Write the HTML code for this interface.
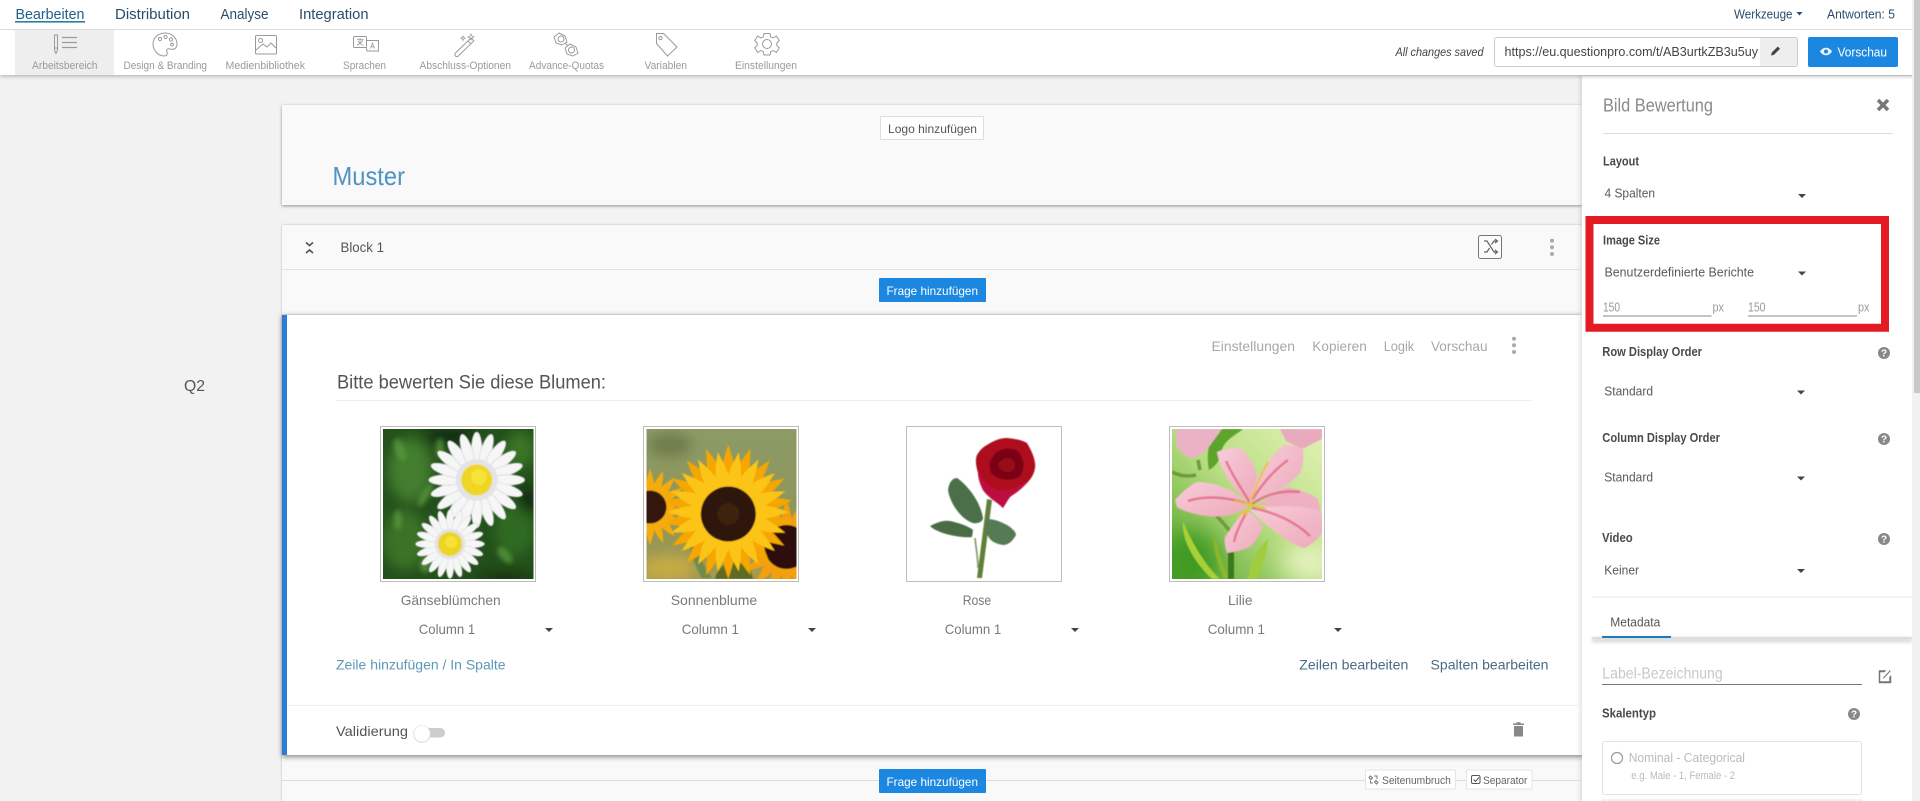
<!DOCTYPE html>
<html lang="de">
<head>
<meta charset="utf-8">
<title>Bild Bewertung</title>
<style>
html,body{margin:0;padding:0;width:1920px;height:801px;overflow:hidden;background:#f2f2f2;font-family:"Liberation Sans",sans-serif}
.a{position:absolute}
svg{position:absolute;left:0;top:0}
text{font-family:"Liberation Sans",sans-serif;white-space:pre}
.t{font-size:14px;fill:#666}
.nav{font-size:15px;fill:#2b4c6b}
.tb{font-size:11px;fill:#9a9a9a}
.lb{font-size:13px;font-weight:bold;fill:#4a4a4a}
.v{font-size:13px;fill:#5a5a5a}
.act{font-size:14px;fill:#a8a8a8}
.lab{font-size:14px;fill:#7a7a7a}
.ic{fill:none;stroke:#9a9a9a;stroke-width:1}
</style>
</head>
<body>
<div class="a" style="left:282px;top:105px;width:1300px;height:100px;background:#f9f9f9;box-shadow:0 1px 3px rgba(0,0,0,.4)"></div>
<div class="a" style="left:282px;top:225px;width:1300px;height:576px;background:#f9f9f9;box-shadow:0 0 2px rgba(0,0,0,.25)"></div>
<div class="a" style="left:282px;top:314px;width:1301px;height:441px;background:#fff;box-shadow:0 2px 5px rgba(0,0,0,.45)"></div>
<div class="a" style="left:282px;top:314px;width:4.5px;height:441px;background:#2a7fd4"></div>
<div class="a" style="left:1582px;top:76px;width:330px;height:725px;background:#fff;box-shadow:-2px 0 4px rgba(0,0,0,.12)"></div>
<div class="a" style="left:1592px;top:596px;width:320px;height:2px;background:#f3f3f3"></div>
<div class="a" style="left:1592px;top:637px;width:320px;height:2px;background:#ddd;box-shadow:0 2px 4px rgba(0,0,0,.35)"></div>
<div class="a" style="left:0;top:0;width:1920px;height:75px;background:#fff;box-shadow:0 1px 4px rgba(0,0,0,.3)"></div>
<div class="a" style="left:0;top:29px;width:1914px;height:1px;background:#ddd"></div>
<div class="a" style="left:15px;top:30px;width:99px;height:45px;background:#eee"></div>
<div class="a" style="left:1912px;top:0;width:8px;height:801px;background:#f1f1f1"></div>
<div class="a" style="left:1914px;top:0;width:6px;height:393px;background:#c8c8c8"></div>

<svg width="1920" height="801" viewBox="0 0 1920 801" xmlns="http://www.w3.org/2000/svg">
<defs>
<filter id="b0" x="-10%" y="-10%" width="120%" height="120%"><feGaussianBlur stdDeviation="0.5"/></filter>
<filter id="b1" x="-10%" y="-10%" width="120%" height="120%"><feGaussianBlur stdDeviation="0.8"/></filter>
<filter id="b3" x="-30%" y="-30%" width="160%" height="160%"><feGaussianBlur stdDeviation="2.5"/></filter>
<filter id="b6" x="-50%" y="-50%" width="200%" height="200%"><feGaussianBlur stdDeviation="6"/></filter>
<filter id="b12" x="-80%" y="-80%" width="260%" height="260%"><feGaussianBlur stdDeviation="12"/></filter>
<clipPath id="c1"><rect x="383" y="429" width="150.5" height="150"/></clipPath>
<clipPath id="c2"><rect x="646.5" y="429" width="150" height="150"/></clipPath>
<clipPath id="c4"><rect x="1172" y="429" width="150" height="150"/></clipPath>
<linearGradient id="sun" x1="0" y1="0" x2="0" y2="1"><stop offset="0" stop-color="#8c9a68"/><stop offset=".6" stop-color="#8f9658"/><stop offset="1" stop-color="#a69a50"/></linearGradient>
<linearGradient id="lil" x1="1" y1="0" x2="0" y2="1"><stop offset="0" stop-color="#e2f2b4"/><stop offset=".5" stop-color="#b6dc80"/><stop offset="1" stop-color="#55a52c"/></linearGradient>
<linearGradient id="pk" x1="0" y1="0" x2="1" y2="1"><stop offset="0" stop-color="#f7ccd8"/><stop offset="1" stop-color="#eeaabc"/></linearGradient>
<!-- daisy petals -->
<ellipse id="d1" cx="0" cy="-31" rx="5.2" ry="17" fill="#f6f6f6" stroke="#cfcfd4" stroke-width=".6"/>
<g id="d2"><use href="#d1"/><use href="#d1" transform="rotate(18)"/></g>
<g id="d4"><use href="#d2"/><use href="#d2" transform="rotate(36)"/></g>
<g id="d5"><use href="#d4"/><use href="#d1" transform="rotate(72)"/></g>
<g id="d20"><use href="#d5"/><use href="#d5" transform="rotate(90)"/><use href="#d5" transform="rotate(180)"/><use href="#d5" transform="rotate(270)"/></g>
<!-- sunflower petals -->
<path id="s1" d="M-7-24C-9-42-4-54 0-66 4-54 9-42 7-24z"/>
<g id="s2"><use href="#s1"/><use href="#s1" transform="rotate(20)"/></g>
<g id="s3"><use href="#s2"/><use href="#s1" transform="rotate(40)"/><use href="#s1" transform="rotate(60)"/></g>
<g id="s18"><use href="#s3"/><use href="#s3" transform="rotate(80)"/><use href="#s3" transform="rotate(160)"/><use href="#s3" transform="rotate(240)"/><use href="#s1" transform="rotate(320)"/><use href="#s1" transform="rotate(340)"/></g>
</defs>

<!-- top nav -->
<text class="nav" x="15.5" y="19" textLength="69" lengthAdjust="spacingAndGlyphs" style="fill:#20608a">Bearbeiten</text>
<rect x="15" y="21" width="70" height="1.6" fill="#2a7f9e"/>
<text class="nav" x="115" y="19" textLength="75" lengthAdjust="spacingAndGlyphs">Distribution</text>
<text class="nav" x="220.5" y="19" textLength="48" lengthAdjust="spacingAndGlyphs">Analyse</text>
<text class="nav" x="299" y="19" textLength="69.5" lengthAdjust="spacingAndGlyphs">Integration</text>
<text class="nav" x="1734" y="18.5" textLength="58.5" lengthAdjust="spacingAndGlyphs" style="font-size:13px">Werkzeuge</text>
<polygon points="1796.5,12 1802.5,12 1799.5,15.5" fill="#2b4c6b"/>
<text class="nav" x="1827" y="18.5" textLength="68" lengthAdjust="spacingAndGlyphs" style="font-size:13px">Antworten: 5</text>

<!-- toolbar labels -->
<text class="tb" x="32" y="69" textLength="65.5" lengthAdjust="spacingAndGlyphs">Arbeitsbereich</text>
<text class="tb" x="123.5" y="69" textLength="83.5" lengthAdjust="spacingAndGlyphs">Design &amp; Branding</text>
<text class="tb" x="225.5" y="69" textLength="79.5" lengthAdjust="spacingAndGlyphs">Medienbibliothek</text>
<text class="tb" x="343" y="69" textLength="43" lengthAdjust="spacingAndGlyphs">Sprachen</text>
<text class="tb" x="419.5" y="69" textLength="91.5" lengthAdjust="spacingAndGlyphs">Abschluss-Optionen</text>
<text class="tb" x="529" y="69" textLength="75" lengthAdjust="spacingAndGlyphs">Advance-Quotas</text>
<text class="tb" x="644.5" y="69" textLength="42.5" lengthAdjust="spacingAndGlyphs">Variablen</text>
<text class="tb" x="735" y="69" textLength="62" lengthAdjust="spacingAndGlyphs">Einstellungen</text>

<!-- toolbar icons -->
<g class="ic">
<path d="M54.5 35h3v15l-1.5 3.5-1.5-3.5z"/><path d="M54.5 48h3"/>
<path d="M62 37.5h15M62 42.5h15M62 47.5h15" stroke-width="1.2"/>
<path d="M165 33c7 0 12 5 12 11 0 5-4 6-7 5-3-1-4 1-3 3 1 3-1 4-3 4-6 0-11-6-11-12 0-6 5-11 12-11z"/>
<circle cx="160" cy="39" r="1.6"/><circle cx="165.5" cy="37" r="1.6"/><circle cx="171" cy="39.5" r="1.6"/><circle cx="172" cy="44.5" r="1.4"/>
<rect x="255.5" y="35.5" width="21" height="18.5" rx="1"/>
<path d="M256 50l7-6 4 3 4-4 5 5"/><circle cx="260.5" cy="40.5" r="2"/>
<rect x="353.5" y="36.5" width="13" height="11" rx="1"/><path d="M366 40.500h12.500v10.500h-11.500l-.8-3.500"/>
<path d="M357 39.500h6.500M360 38v5M357 45c3-1 5-3 5.500-5M358 41c1 2 3 3.500 5.500 4.500" stroke-width=".8"/>
<path d="M370.500 48.500l2-5.500 2 5.500M371.300 46.800h2.500" stroke-width=".8"/>
<path d="M455.500 53l15.500-15 2.800 2.800-15.500 15.200a2 2 0 0 1-2.800-3z"/><path d="M468 41l2.800 2.800"/>
<path d="M471 34l1 2 2 1-2 1-1 2-1-2-2-1 2-1zM463 36l.7 1.500 1.500.7-1.500.7-.7 1.500-.7-1.500-1.500-.7 1.500-.7z" stroke-width=".8"/>
<path d="M559 33l6 3 2 6-5 3-6-2-2-6z"/><path d="M570 44l6 3 2 6-5 3-6-2-2-6z"/><circle cx="561" cy="39" r="3"/><circle cx="571.500" cy="50" r="3"/><path d="M565 43l3 3"/>
<path d="M656.500 33.500h7l13.500 13.500-9.500 9-11-12.500z"/><circle cx="660.500" cy="38" r="1.600"/>
<circle cx="767" cy="44" r="4.500"/>
<path d="M764 33.500h6l.8 3.500 2.500 1 3-2 3 4.500-2.500 2.500v2.500l2.500 2.500-3 4.500-3-2-2.500 1-.8 3.500h-6l-.8-3.500-2.500-1-3 2-3-4.500 2.500-2.500v-2.500l-2.500-2.500 3-4.500 3 2 2.500-1z"/>
</g>

<!-- url area -->
<text x="1395.500" y="56" textLength="88" lengthAdjust="spacingAndGlyphs" style="font-size:12px;font-style:italic;fill:#444">All changes saved</text>
<rect x="1494.500" y="37.500" width="303" height="29" rx="2" fill="#fff" stroke="#ccc"/>
<rect x="1760" y="38" width="37" height="28" fill="#eee"/>
<text x="1504.500" y="56" textLength="253.500" lengthAdjust="spacingAndGlyphs" style="font-size:13px;fill:#444">https://eu.questionpro.com/t/AB3urtkZB3u5uy</text>
<path d="M1771 55.500l.8-3 6-6 2.200 2.200-6 6z" fill="#444"/>
<rect x="1808" y="37" width="90" height="30" rx="2" fill="#1b87e0"/>
<path d="M1820 51.500c3-5 9-5 12 0-3 5-9 5-12 0z" fill="#fff" opacity=".9"/><circle cx="1826" cy="51.500" r="2" fill="#1b87e0"/>
<text x="1837.500" y="56.500" textLength="49.500" lengthAdjust="spacingAndGlyphs" style="font-size:13px;fill:#fff">Vorschau</text>

<!-- side -->
<text x="184" y="391" textLength="21" lengthAdjust="spacingAndGlyphs" style="font-size:16px;fill:#555">Q2</text>

<!-- header card -->
<rect x="880.500" y="116.500" width="103" height="23" fill="#fff" stroke="#ddd"/>
<text x="888" y="133" textLength="89" lengthAdjust="spacingAndGlyphs" style="font-size:12px;fill:#555">Logo hinzufügen</text>
<text x="332.500" y="185" textLength="72.500" lengthAdjust="spacingAndGlyphs" style="font-size:26px;fill:#4d93c4">Muster</text>

<!-- block header -->
<rect x="282" y="269" width="1300" height="1" fill="#e2e2e2"/>
<rect x="282" y="314" width="1300" height="1" fill="#ccc"/>
<path d="M306 242.500l3.500 3 3.500-3M306 253l3.500-3 3.500 3" fill="none" stroke="#555" stroke-width="1.700"/>
<text x="340.500" y="252" textLength="43.500" lengthAdjust="spacingAndGlyphs" style="font-size:14px;fill:#555">Block 1</text>
<rect x="1478.500" y="235.500" width="23" height="23" rx="2" fill="#fbfbfb" stroke="#777"/>
<path d="M1484 241h3l7 11h3M1484 252h3l2.500-4M1491.500 244.500l2.500-3.500h3M1495 239l2.500 2-2.500 2M1495 250l2.500 2-2.500 2" fill="none" stroke="#666" stroke-width="1.200"/>
<g fill="#aaa"><circle cx="1552" cy="240.700" r="2"/><circle cx="1552" cy="247.300" r="2"/><circle cx="1552" cy="254" r="2"/>
<circle cx="1514" cy="338.700" r="2"/><circle cx="1514" cy="345.300" r="2"/><circle cx="1514" cy="352" r="2"/></g>
<rect x="879" y="278" width="107" height="24" rx="1" fill="#1b87e0"/>
<text x="886.500" y="295" textLength="91.500" lengthAdjust="spacingAndGlyphs" style="font-size:12px;fill:#fff">Frage hinzufügen</text>

<!-- question card -->
<text class="act" x="1211.500" y="351" textLength="83.500" lengthAdjust="spacingAndGlyphs">Einstellungen</text>
<text class="act" x="1312.300" y="351" textLength="54.500" lengthAdjust="spacingAndGlyphs">Kopieren</text>
<text class="act" x="1383.700" y="351" textLength="30.500" lengthAdjust="spacingAndGlyphs">Logik</text>
<text class="act" x="1431" y="351" textLength="56.500" lengthAdjust="spacingAndGlyphs">Vorschau</text>
<text x="337" y="388.500" textLength="269" lengthAdjust="spacingAndGlyphs" style="font-size:19px;fill:#555">Bitte bewerten Sie diese Blumen:</text>
<rect x="336" y="400" width="1196" height="1" fill="#eee"/>

<!-- image frames -->
<rect x="380.500" y="426.500" width="155" height="155" fill="#fff" stroke="#bdbdb5"/>
<rect x="643.500" y="426.500" width="155" height="155" fill="#fff" stroke="#bdbdb5"/>
<rect x="906.500" y="426.500" width="155" height="155" fill="#fff" stroke="#bdbdbd"/>
<rect x="1169.500" y="426.500" width="155" height="155" fill="#fff" stroke="#bdbdbd"/>

<!-- daisy -->
<g clip-path="url(#c1)">
<rect x="383" y="429" width="151" height="150" fill="#24501c"/>
<g filter="url(#b6)">
<ellipse cx="410" cy="470" rx="22" ry="32" fill="#437e2e"/>
<ellipse cx="405" cy="540" rx="22" ry="30" fill="#3a7226"/>
<ellipse cx="515" cy="530" rx="20" ry="26" fill="#2f6a22"/>
<ellipse cx="520" cy="450" rx="15" ry="18" fill="#3a7528"/>
<ellipse cx="450" cy="436" rx="25" ry="8" fill="#0f2c0c"/>
<ellipse cx="528" cy="500" rx="8" ry="14" fill="#0f260a"/>
<ellipse cx="505" cy="578" rx="28" ry="6" fill="#14300f"/>
</g>
<g filter="url(#b3)" fill="#5a9a3c" opacity=".75">
<ellipse cx="400" cy="450" rx="5" ry="12" transform="rotate(-20 400 450)"/>
<ellipse cx="425" cy="495" rx="4" ry="13" transform="rotate(30 425 495)"/>
<ellipse cx="398" cy="520" rx="4" ry="10"/>
<ellipse cx="425" cy="565" rx="5" ry="8"/>
<ellipse cx="505" cy="555" rx="5" ry="10" transform="rotate(-40 505 555)"/>
<ellipse cx="440" cy="448" rx="4" ry="10"/>
</g>
<g filter="url(#b0)">
<g transform="translate(476.700 480)"><use href="#d20"/><circle r="21" fill="#e4e4e8"/></g>
<circle cx="476.700" cy="480" r="15.500" fill="#efd620"/>
<circle cx="479" cy="477" r="8" fill="#f6e23a"/>
<g transform="translate(450 544) scale(.72)"><use href="#d20"/><circle r="21" fill="#e2e2e6"/></g>
<circle cx="450" cy="544" r="12" fill="#ecd520"/>
<circle cx="451" cy="542" r="6" fill="#f5e138"/>
</g>
</g>

<!-- sunflower -->
<g clip-path="url(#c2)">
<rect x="646.500" y="429" width="150" height="150" fill="url(#sun)"/>
<ellipse cx="668" cy="568" rx="26" ry="12" fill="#c6ab45" filter="url(#b6)"/>
<ellipse cx="670" cy="445" rx="22" ry="12" fill="#6f7d4c" filter="url(#b6)"/>
<path d="M715 579c2-10 10-16 18-17 10 0 18 6 20 17z" fill="#5f6a20" filter="url(#b1)"/>
<path d="M690 540c6 8 12 24 22 38h-10c-6-10-12-24-12-38z" fill="#6f8a50" filter="url(#b1)"/>
<g filter="url(#b0)">
<g transform="translate(650 507) scale(.58)"><use href="#s18" fill="#f4ac0c"/></g>
<circle cx="650" cy="507" r="16.500" fill="#35190a"/>
<g transform="translate(786.500 547) scale(.72)"><use href="#s18" fill="#f2a008"/></g>
<circle cx="786.500" cy="547" r="22" fill="#2d1008"/>
<g transform="translate(728.300 512) scale(.98 1.02)"><use href="#s18" fill="#f5a606"/></g>
<g transform="translate(728.300 512) scale(.92) rotate(10)"><use href="#s18" fill="#fcc414"/></g>
<circle cx="728.300" cy="514" r="27.500" fill="#2d1208"/>
<circle cx="728.300" cy="514" r="11" fill="#3c2410"/>
</g>
</g>

<!-- rose -->
<g filter="url(#b0)">
<path d="M987 499L977 578h5L992 500z" fill="#5f8038"/>
<path d="M975 538c1 10 3 20 3 30" fill="none" stroke="#7a9058" stroke-width="1.500"/>
<path d="M948 490C949 483 952 478 957 478 966 484 980 500 983 518 983 522 977 524 973 523 962 520 950 504 948 490z" fill="#4c7049"/>
<path d="M930 526C938 522 944 520 950 521 960 523 970 527 973 530L972 537C964 538 956 536 950 535 942 533 934 530 930 526z" fill="#486c44"/>
<path d="M987 519C995 519 1001 522 1007 525 1012 528 1016 532 1016 535 1012 542 1008 545 1003 545 996 544 990 541 988 536 985 530 985 525 987 519z" fill="#567a52"/>
<path d="M977 455C980 450 983 447 987 445 993 441 1000 438 1007 438 1015 439 1022 440 1027 443 1033 453 1036 462 1035 468 1034 475 1030 480 1027 483 1020 490 1014 494 1010 497 1007 501 1005 505 1003 508 1000 505 996 502 993 500 988 496 985 493 983 490 980 484 978 478 978 473 976 466 975 460 977 455z" fill="#ad0a1e"/>
<path d="M978 470C982 484 996 492 1008 490 1016 488 1024 484 1029 480 1022 490 1014 494 1010 497 1007 501 1005 505 1003 508 1000 505 996 502 993 500 988 496 985 493 983 490 980 484 978 478 978 470z" fill="#bd0c40"/>
<path d="M990 462C994 450 1006 446 1016 450 1024 456 1026 468 1020 476 1012 482 998 480 992 474 990 470 989 466 990 462z" fill="#7a0612"/>
<path d="M998 464C1002 458 1010 456 1014 461 1017 466 1014 472 1008 472 1003 472 999 469 998 464z" fill="#960a18"/>
</g>

<!-- lily -->
<g clip-path="url(#c4)">
<rect x="1172" y="429" width="150" height="150" fill="url(#lil)"/>
<ellipse cx="1190" cy="562" rx="30" ry="32" fill="#3f9a22" filter="url(#b12)"/>
<ellipse cx="1310" cy="562" rx="28" ry="20" fill="#e6f2c0" filter="url(#b12)"/>
<g filter="url(#b0)">
<path d="M1209 470c-3-16-1-34 12-41h22c-7 6-17 10-21 20-1 8-4 16-13 21z" fill="#5fa42a"/>
<path d="M1183 521c8 20 22 44 37 58h-8c-14-13-31-36-29-58z" fill="#a8d038"/>
<path d="M1214 530c3 16 8 34 16 49h-6c-6-14-12-32-10-49z" fill="#8ab82c"/>
<rect x="1228" y="548" width="6" height="31" fill="#3a7a1c"/>
<path d="M1248 579c2-14 8-30 20-40-1 16-6 30-11 40z" fill="#a0cc40"/>
<path d="M1176 429h46l-16 22-14 8-8-4-8-10z" fill="#eab2c4"/>
<path d="M1280 429h42v10l-20 10-16-8z" fill="#e8aabc"/>
<path d="M1200 470l-2-10M1172 472c8 4 16 5 24 3M1202 500c6 8 20 20 30 34" stroke="#6e9c3a" stroke-width="3.500" fill="none"/>
<path d="M1217 452C1226 448 1236 447 1243 450 1250 458 1255 466 1257 477 1256 486 1253 496 1250 503 1240 495 1232 487 1227 477 1222 468 1218 460 1217 452z" fill="url(#pk)"/>
<path d="M1250 503C1252 492 1255 482 1260 473 1268 462 1275 452 1283 445 1290 444 1298 446 1303 450 1304 458 1303 466 1300 473 1292 482 1283 488 1273 493 1265 497 1257 500 1250 503z" fill="url(#pk)"/>
<path d="M1175 500C1182 492 1189 486 1197 482 1208 482 1220 485 1230 490 1238 495 1245 500 1250 505 1244 510 1237 513 1230 515 1220 517 1210 517 1200 515 1190 513 1181 510 1177 507z" fill="url(#pk)"/>
<path d="M1258 505C1268 497 1277 491 1287 487 1298 489 1308 493 1317 498 1320 505 1320 510 1320 510 1300 510 1280 508 1258 505z" fill="#efb0c2"/>
<path d="M1250 510C1270 505 1300 505 1320 510 1323 518 1323 525 1322 533 1316 541 1310 546 1303 548 1292 544 1282 537 1273 530 1265 524 1257 517 1250 510z" fill="url(#pk)"/>
<path d="M1246 510C1253 514 1259 520 1263 527 1260 534 1256 541 1250 547 1243 550 1235 552 1227 553 1225 547 1224 542 1225 537 1231 528 1238 518 1246 510z" fill="url(#pk)"/>
<path d="M1250 503c-8-14-18-28-24-42M1250 505c-20-8-44-10-62-4M1252 504c14-10 30-14 48-12M1252 508c22 4 44 14 58 28M1248 510c-6 10-12 22-14 32M1252 500c10-16 22-30 36-40" fill="none" stroke="#de5a7c" stroke-width="2.500" opacity=".7"/>
<path d="M1246 516c5-18 12-36 22-54M1250 505l-16-4M1250 505l16 4M1248 510l-10 6" fill="none" stroke="#ebc23e" stroke-width="2"/>
</g>
</g>

<!-- labels -->
<text class="lab" x="400.700" y="605" textLength="100" lengthAdjust="spacingAndGlyphs">Gänseblümchen</text>
<text class="lab" x="670.700" y="605" textLength="86.500" lengthAdjust="spacingAndGlyphs">Sonnenblume</text>
<text class="lab" x="962.700" y="605" textLength="28.500" lengthAdjust="spacingAndGlyphs">Rose</text>
<text class="lab" x="1228" y="605" textLength="24.500" lengthAdjust="spacingAndGlyphs">Lilie</text>
<text class="lab" x="418.700" y="634" textLength="56.500" lengthAdjust="spacingAndGlyphs">Column 1</text>
<text class="lab" x="681.700" y="634" textLength="57.300" lengthAdjust="spacingAndGlyphs">Column 1</text>
<text class="lab" x="944.700" y="634" textLength="56.600" lengthAdjust="spacingAndGlyphs">Column 1</text>
<text class="lab" x="1207.700" y="634" textLength="57.300" lengthAdjust="spacingAndGlyphs">Column 1</text>
<g fill="#444">
<polygon points="545,628 553,628 549,632"/><polygon points="808,628 816,628 812,632"/><polygon points="1071,628 1079,628 1075,632"/><polygon points="1334,628 1342,628 1338,632"/>
</g>

<text x="336" y="669.300" textLength="169.500" lengthAdjust="spacingAndGlyphs" style="font-size:14px;fill:#5c99b8">Zeile hinzufügen / In Spalte</text>
<text x="1299.300" y="669.300" textLength="109" lengthAdjust="spacingAndGlyphs" style="font-size:14px;fill:#4a6b85">Zeilen bearbeiten</text>
<text x="1430.500" y="669.300" textLength="118" lengthAdjust="spacingAndGlyphs" style="font-size:14px;fill:#4a6b85">Spalten bearbeiten</text>
<rect x="287" y="705" width="1295" height="1" fill="#eee"/>
<text x="336" y="736" textLength="72" lengthAdjust="spacingAndGlyphs" style="font-size:14px;fill:#555">Validierung</text>
<rect x="421" y="728" width="24" height="9.500" rx="4.750" fill="#ccc"/>
<circle cx="422" cy="734" r="9" fill="#ddd" opacity=".7"/>
<circle cx="422" cy="733.500" r="7.800" fill="#fff"/>
<path d="M1513 725h11v-1.500h-3l-.8-1.300h-3.400l-.8 1.300h-3zM1514 726h9v10.500h-9z" fill="#888"/>

<!-- bottom strip -->
<rect x="282" y="780" width="1300" height="1" fill="#ddd"/>
<rect x="879" y="769" width="107" height="24" rx="1" fill="#1b87e0"/>
<text x="886.500" y="786" textLength="91.500" lengthAdjust="spacingAndGlyphs" style="font-size:12px;fill:#fff">Frage hinzufügen</text>
<rect x="1365.500" y="770" width="90" height="19" rx="1" fill="#fff" stroke="#e5e5e5"/>
<path d="M1370.500 776l2 2-1.500 1.500-2-2zM1376 780.500l2 2-1.500 1.500-2-2zM1374 776h3v3M1373 783h-2.500v-2.500" fill="none" stroke="#777"/>
<text x="1382" y="784" textLength="68.800" lengthAdjust="spacingAndGlyphs" style="font-size:11px;fill:#666">Seitenumbruch</text>
<rect x="1466.500" y="770" width="65.500" height="19" rx="1" fill="#fff" stroke="#e5e5e5"/>
<rect x="1471.500" y="775.500" width="8.500" height="8" rx="1.500" fill="none" stroke="#555"/>
<path d="M1473.500 779.500l2 2 3.500-4" fill="none" stroke="#555"/>
<text x="1483" y="784" textLength="44.400" lengthAdjust="spacingAndGlyphs" style="font-size:11px;fill:#666">Separator</text>

<!-- right panel -->
<text x="1603" y="111.500" textLength="110" lengthAdjust="spacingAndGlyphs" style="font-size:18px;fill:#8a8a8a">Bild Bewertung</text>
<path d="M1878 100l10 10M1888 100l-10 10" stroke="#777" stroke-width="3.500" fill="none"/>
<rect x="1603" y="133" width="290" height="1" fill="#ddd"/>
<text class="lb" x="1603" y="165.500" textLength="36" lengthAdjust="spacingAndGlyphs">Layout</text>
<text class="v" x="1604.500" y="197.500" textLength="50.500" lengthAdjust="spacingAndGlyphs">4 Spalten</text>
<polygon points="1798,194 1806,194 1802,198" fill="#444"/>

<path fill="#e31b23" fill-rule="evenodd" d="M1585.500 216H1889V331.700H1585.500zM1593.500 224V323.700H1881V224z"/>
<text class="lb" x="1603" y="244.500" textLength="57" lengthAdjust="spacingAndGlyphs">Image Size</text>
<text class="v" x="1604.500" y="276.300" textLength="149.500" lengthAdjust="spacingAndGlyphs">Benutzerdefinierte Berichte</text>
<polygon points="1798,271.500 1806,271.500 1802,275.500" fill="#444"/>
<text x="1603" y="311.300" textLength="17" lengthAdjust="spacingAndGlyphs" style="font-size:13px;fill:#999">150</text>
<text x="1712.500" y="311.300" textLength="11.500" lengthAdjust="spacingAndGlyphs" style="font-size:13px;fill:#999">px</text>
<rect x="1603" y="315.500" width="108.500" height="1" fill="#888"/>
<text x="1748" y="311.300" textLength="17.500" lengthAdjust="spacingAndGlyphs" style="font-size:13px;fill:#999">150</text>
<text x="1858" y="311.300" textLength="11.500" lengthAdjust="spacingAndGlyphs" style="font-size:13px;fill:#999">px</text>
<rect x="1748" y="315.500" width="109" height="1" fill="#888"/>

<text class="lb" x="1602.300" y="356" textLength="99.700" lengthAdjust="spacingAndGlyphs">Row Display Order</text>
<text class="v" x="1604.300" y="395.300" textLength="48.700" lengthAdjust="spacingAndGlyphs">Standard</text>
<polygon points="1797,390.500 1805,390.500 1801,394.500" fill="#444"/>
<text class="lb" x="1602.300" y="442" textLength="117.700" lengthAdjust="spacingAndGlyphs">Column Display Order</text>
<text class="v" x="1604.300" y="481.300" textLength="48.700" lengthAdjust="spacingAndGlyphs">Standard</text>
<polygon points="1797,476.500 1805,476.500 1801,480.500" fill="#444"/>
<text class="lb" x="1602" y="542" textLength="30.700" lengthAdjust="spacingAndGlyphs">Video</text>
<text class="v" x="1604.300" y="574.300" textLength="34.700" lengthAdjust="spacingAndGlyphs">Keiner</text>
<polygon points="1797,569 1805,569 1801,573" fill="#444"/>
<g fill="#888">
<circle cx="1884" cy="353" r="6"/><circle cx="1884" cy="439" r="6"/><circle cx="1884" cy="539" r="6"/><circle cx="1854" cy="714" r="6"/>
</g>
<g style="font-size:10px;font-weight:bold;fill:#fff" text-anchor="middle">
<text x="1884" y="356.500">?</text><text x="1884" y="442.500">?</text><text x="1884" y="542.500">?</text><text x="1854" y="717.500">?</text>
</g>
<text x="1610.300" y="626.300" textLength="50" lengthAdjust="spacingAndGlyphs" style="font-size:13px;fill:#555">Metadata</text>
<rect x="1602" y="636" width="69" height="2" fill="#1f7ab8"/>
<text x="1602.300" y="678.300" textLength="120.400" lengthAdjust="spacingAndGlyphs" style="font-size:16px;fill:#c8c8c8">Label-Bezeichnung</text>
<rect x="1602" y="684" width="260" height="1" fill="#777"/>
<path d="M1879 670.500h7l-1.500 1.500h-4.500v9.500h9.500v-4.500l1.500-1.500v7.500h-12zM1883 678l7-7.500-.5-.5 1 1-7 7.500z" fill="#777" stroke="#777" stroke-width=".5"/>
<text class="lb" x="1602" y="717.700" textLength="54" lengthAdjust="spacingAndGlyphs">Skalentyp</text>
<rect x="1602.500" y="741.500" width="259" height="53" rx="2" fill="#fff" stroke="#e3e3e3"/>
<rect x="1602.500" y="800" width="259" height="4" fill="#fff" stroke="#e3e3e3"/>
<circle cx="1617" cy="758" r="5.500" fill="#fff" stroke="#999" stroke-width="1.200"/>
<text x="1628.700" y="762" textLength="116.300" lengthAdjust="spacingAndGlyphs" style="font-size:13px;fill:#bbb">Nominal - Categorical</text>
<text x="1631.300" y="779" textLength="103.700" lengthAdjust="spacingAndGlyphs" style="font-size:11px;fill:#bbb">e.g. Male - 1, Female - 2</text>
</svg>
</body>
</html>
